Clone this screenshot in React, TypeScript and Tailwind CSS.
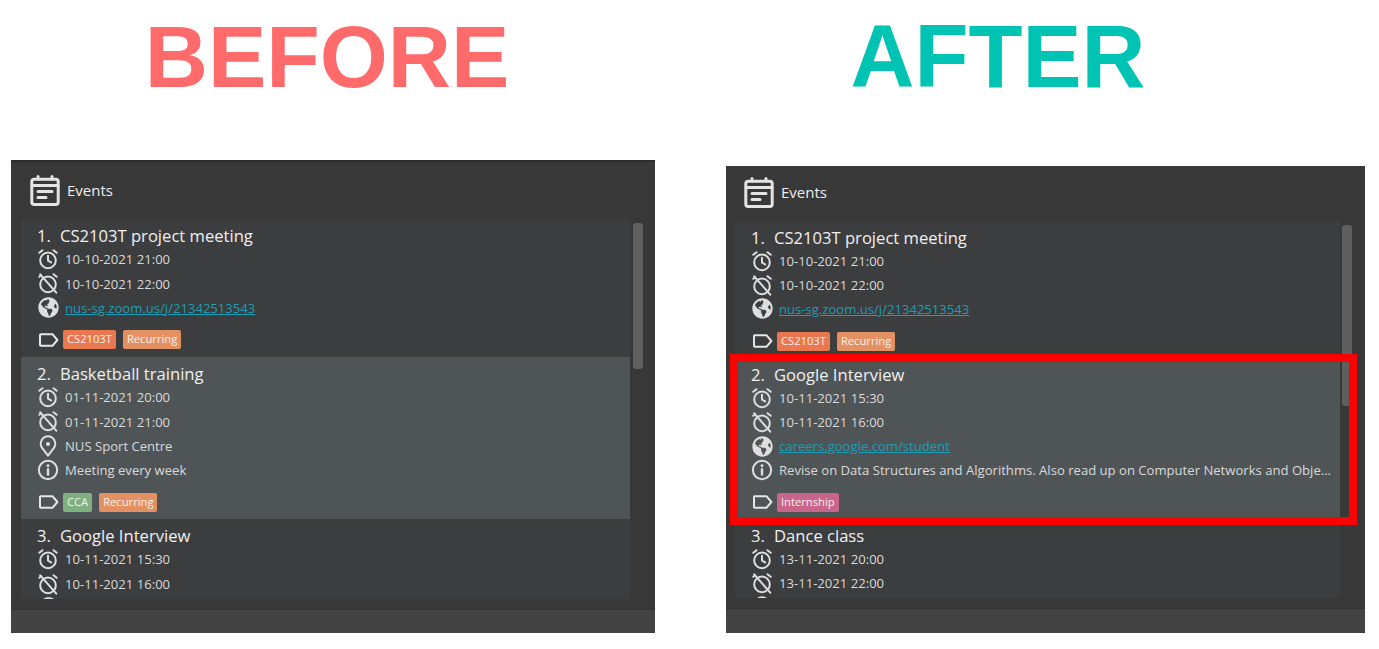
import React from "react";
import { FaGlobeAmericas } from "react-icons/fa";

const font = { fontFamily: '"Open Sans", "Noto Sans", sans-serif' };

function Clock() {
  return (
    <svg viewBox="0 0 24 24" className="w-[22px] h-[22px] shrink-0" fill="none" stroke="#dedede" strokeWidth="2.2" strokeLinecap="round" strokeLinejoin="round">
      <circle cx="12" cy="13.5" r="8.5" />
      <path d="M12 8.5v5.2l3.4 2" />
      <path d="M2.5 5.2 6 2.4M21.5 5.2 18 2.4" />
    </svg>
  );
}
function ClockOff() {
  return (
    <svg viewBox="0 0 24 24" className="w-[22px] h-[22px] shrink-0" fill="none" stroke="#dedede" strokeWidth="2.2" strokeLinecap="round" strokeLinejoin="round">
      <circle cx="12" cy="13.5" r="8.5" />
      <path d="M2.5 5.2 4.5 3.6M21.5 5.2 18 2.4" />
      <path d="M3.5 2.5 21 22.5" />
    </svg>
  );
}
function Globe() {
  return (
    <span className="w-[22px] h-[22px] shrink-0 flex items-center justify-center">
      <FaGlobeAmericas className="w-[21px] h-[21px] text-[#dedede]" />
    </span>
  );
}
function Pin() {
  return (
    <svg viewBox="0 0 24 24" className="w-[22px] h-[22px] shrink-0" fill="none" stroke="#dedede" strokeWidth="2.2" strokeLinejoin="round">
      <path d="M12 22.5 6.4 15.2a8 8 0 1 1 11.2 0Z" />
      <circle cx="12" cy="9.8" r="2.2" fill="#dedede" stroke="none" />
    </svg>
  );
}
function Info() {
  return (
    <svg viewBox="0 0 24 24" className="w-[22px] h-[22px] shrink-0" fill="none" stroke="#dedede" strokeWidth="2.2" strokeLinecap="round">
      <circle cx="12" cy="12" r="10" />
      <path d="M12 11v6" strokeWidth="2.6" />
      <circle cx="12" cy="7.4" r="1.6" fill="#dedede" stroke="none" />
    </svg>
  );
}
function TagIcon() {
  return (
    <svg viewBox="0 0 20 14" className="w-[20px] h-[14px] shrink-0" fill="none" stroke="#e6e6e6" strokeWidth="2" strokeLinejoin="round">
      <path d="M1.8 1.2h11.6l5 5.8-5 5.8H1.8a.8.8 0 0 1-.8-.8V2a.8.8 0 0 1 .8-.8Z" />
    </svg>
  );
}
function CalendarIcon() {
  return (
    <svg viewBox="0 0 30 31" className="w-[30px] h-[31px] shrink-0" fill="none" stroke="#e4e4e4" strokeWidth="3" strokeLinecap="round" strokeLinejoin="round">
      <rect x="1.8" y="4.2" width="26.4" height="25.2" rx="2.4" />
      <path d="M8 1.6V4M22 1.6V4M2 10.6h26" />
      <path d="M8 16.4h14M8 22.4h8" />
    </svg>
  );
}

type Row = { icon: "start" | "end" | "globe" | "pin" | "info"; text: string };
type Card = { n: number; title: string; rows: Row[]; tags: { label: string; cls: string }[]; selected?: boolean };

const icons = { start: Clock, end: ClockOff, globe: Globe, pin: Pin, info: Info };

function EventCard({ card, rowCls, padCls }: { card: Card; rowCls: string; padCls: string }) {
  return (
    <div className={`pl-4 pr-2 pb-[7px] ${padCls} ${card.selected ? "bg-[#4f5557]" : ""}`}>
      <div className="flex items-center h-[21px] text-[16.6px] font-medium text-[#f0f0f0] whitespace-nowrap">
        <span className="w-[23px] shrink-0">{card.n}.</span>
        <span>{card.title}</span>
      </div>
      {card.rows.map((r, i) => {
        const Icon = icons[r.icon];
        return (
          <div key={i} className={`flex items-center gap-[6px] text-[13.1px] text-[#d9d9d9] whitespace-nowrap ${rowCls}`}>
            <Icon />
            {r.text && <span className={r.icon === "globe" ? "mt-[2px] text-[#1e9cb5] underline" : "mt-[2px]"}>{r.text}</span>}
          </div>
        );
      })}
      {card.tags.length > 0 && (
        <div className="flex items-center h-[20px] mt-[10px] pl-[2px]">
          <TagIcon />
          <div className="flex gap-[7px] ml-[4px]">
            {card.tags.map((t) => (
              <span key={t.label} className={`h-[19px] px-[4px] flex items-center rounded-[2px] text-[11.2px] text-[#f7f0ea] ${t.cls}`}>
                {t.label}
              </span>
            ))}
          </div>
        </div>
      )}
    </div>
  );
}

const orange = "bg-[#e9774f]";
const peach = "bg-[#e39063]";
const green = "bg-[#7fb07f]";
const pink = "bg-[#c9648a]";

const before: Card[] = [
  {
    n: 1,
    title: "CS2103T project meeting",
    rows: [
      { icon: "start", text: "10-10-2021 21:00" },
      { icon: "end", text: "10-10-2021 22:00" },
      { icon: "globe", text: "nus-sg.zoom.us/j/21342513543" },
    ],
    tags: [{ label: "CS2103T", cls: orange }, { label: "Recurring", cls: peach }],
  },
  {
    n: 2,
    title: "Basketball training",
    selected: true,
    rows: [
      { icon: "start", text: "01-11-2021 20:00" },
      { icon: "end", text: "01-11-2021 21:00" },
      { icon: "pin", text: "NUS Sport Centre" },
      { icon: "info", text: "Meeting every week" },
    ],
    tags: [{ label: "CCA", cls: green }, { label: "Recurring", cls: peach }],
  },
  {
    n: 3,
    title: "Google Interview",
    rows: [
      { icon: "start", text: "10-11-2021 15:30" },
      { icon: "end", text: "10-11-2021 16:00" },
      { icon: "globe", text: "" },
    ],
    tags: [],
  },
];

const after: Card[] = [
  before[0],
  {
    n: 2,
    title: "Google Interview",
    selected: true,
    rows: [
      { icon: "start", text: "10-11-2021 15:30" },
      { icon: "end", text: "10-11-2021 16:00" },
      { icon: "globe", text: "careers.google.com/student" },
      { icon: "info", text: "Revise on Data Structures and Algorithms. Also read up on Computer Networks and Obje..." },
    ],
    tags: [{ label: "Internship", cls: pink }],
  },
  {
    n: 3,
    title: "Dance class",
    rows: [
      { icon: "start", text: "13-11-2021 20:00" },
      { icon: "end", text: "13-11-2021 22:00" },
      { icon: "pin", text: "" },
    ],
    tags: [],
  },
];

export default function App() {
  return (
    <div className="w-[1379px] h-[649px] bg-white flex overflow-hidden" style={font}>
      {/* BEFORE */}
      <div className="ml-[11px] w-[644px] flex flex-col">
        <div className="h-[160px] pr-[12px] pt-[12px] text-center">
          <div className="text-[87.5px] leading-[90px] font-bold text-[#ff6b6b]" style={{ fontFamily: '"Liberation Sans", Arial, sans-serif' }}>BEFORE</div>
        </div>
        <div className="h-[473px] bg-[#383838] border-t-2 border-[#2c2c2c] flex flex-col">
          <div className="h-[57px] shrink-0 flex items-center pl-[19px] gap-[7px]">
            <CalendarIcon />
            <span className="text-[15px] font-medium text-[#eeeeee]">Events</span>
          </div>
          <div className="h-[380px] shrink-0 flex">
            <div className="ml-[10px] w-[609px] bg-[#3c3d3f] overflow-hidden">
              {before.map((c) => (
                <EventCard key={c.n} card={c} rowCls="h-[24.3px]" padCls="pt-[7px]" />
              ))}
            </div>
            <div className="ml-[3px] w-[10px] mt-[4px] h-[146px] rounded-[3px] bg-[#5f5f5f]" />
          </div>
          <div className="mt-[10px] flex-1 bg-[#434343] border-t border-[#333333]" />
        </div>
      </div>

      {/* AFTER */}
      <div className="ml-[71px] w-[639px] flex flex-col">
        <div className="h-[166px] pr-[95px] pt-[12px] text-center">
          <div className="text-[88.5px] leading-[90px] font-bold text-[#00c4b3]" style={{ fontFamily: '"Liberation Sans", Arial, sans-serif' }}>AFTER</div>
        </div>
        <div className="relative h-[467px] bg-[#383838] flex flex-col">
          <div className="h-[55px] shrink-0 flex items-center pl-[18px] gap-[7px] pb-[3px]">
            <CalendarIcon />
            <span className="text-[15px] font-medium text-[#eeeeee]">Events</span>
          </div>
          <div className="h-[377px] shrink-0 flex">
            <div className="ml-[9px] w-[605px] bg-[#3c3d3f] overflow-hidden">
              {after.map((c) => (
                <EventCard key={c.n} card={c} rowCls="h-[24.2px]" padCls="pt-[6.5px]" />
              ))}
            </div>
            <div className="ml-[2px] w-[10px] mt-[4px] h-[181px] rounded-[3px] bg-[#5f5f5f]" />
          </div>
          <div className="mt-[10px] flex-1 bg-[#434343] border-t border-[#333333]" />
          <div className="absolute left-[4px] top-[188px] w-[627px] h-[171px] border-[8px] border-[#ff0000]" />
        </div>
      </div>
    </div>
  );
}
